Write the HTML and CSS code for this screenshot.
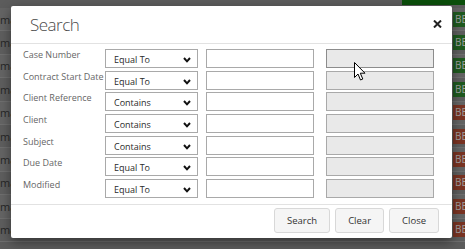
FILE: index.html
```html
<!DOCTYPE html>
<html lang="en">

<head>
    <meta charset="UTF-8">
    <meta name="viewport" content="width=device-width, initial-scale=1.0">
    <title>Cases - Search</title>
    <link rel="stylesheet" href="styles.css">
</head>

<body>
    <!-- page behind the dialog, dimmed -->
    <div class="page">
        <div class="toolbar"><span class="btn-new"></span></div>
        <div class="list">
            <div class="row"><span class="cell-name">ma</span><span class="badge ok">BEARBEITET</span></div>
            <div class="row"><span class="cell-name">ma</span><span class="badge ok">BEARBEITET</span></div>
            <div class="row"><span class="cell-name">ma</span><span class="badge ok">BEARBEITET</span></div>
            <div class="row"><span class="cell-name">ma</span><span class="badge ok">BEARBEITET</span></div>
            <div class="row"><span class="cell-name">ma</span><span class="badge late">BEARBEITET</span></div>
            <div class="row"><span class="cell-name">ma</span><span class="badge late">BEARBEITET</span></div>
            <div class="row"><span class="cell-name">ma</span><span class="badge late">BEARBEITET</span></div>
            <div class="row"><span class="cell-name">ma</span><span class="badge late">BEARBEITET</span></div>
            <div class="row"><span class="cell-name">ma</span><span class="badge late">BEARBEITET</span></div>
            <div class="row"><span class="cell-name">ma</span><span class="badge late">BEARBEITET</span></div>
        </div>
    </div>

    <div class="modal">
        <div class="modal-header">
            <h2>Search</h2>
            <button class="close" title="Close">
                <svg width="9" height="8" viewBox="0 0 9 8"><path d="M1 0.5 L8 7.5 M8 0.5 L1 7.5" stroke="#222" stroke-width="2" fill="none"/></svg>
            </button>
        </div>

        <div class="modal-body">
            <div class="filter-row">
                <label>Case Number</label>
                <div class="select"><span>Equal To</span><svg width="8" height="6" viewBox="0 0 8 6"><polyline points="1,1 4,4.3 7,1" stroke="#111" stroke-width="2" fill="none"/></svg></div>
                <input class="value" type="text">
                <input class="value-to hover" type="text" disabled>
            </div>
            <div class="filter-row">
                <label>Contract Start Date</label>
                <div class="select"><span>Equal To</span><svg width="8" height="6" viewBox="0 0 8 6"><polyline points="1,1 4,4.3 7,1" stroke="#111" stroke-width="2" fill="none"/></svg></div>
                <input class="value" type="text">
                <input class="value-to" type="text" disabled>
            </div>
            <div class="filter-row">
                <label>Client Reference</label>
                <div class="select"><span>Contains</span><svg width="8" height="6" viewBox="0 0 8 6"><polyline points="1,1 4,4.3 7,1" stroke="#111" stroke-width="2" fill="none"/></svg></div>
                <input class="value" type="text">
                <input class="value-to" type="text" disabled>
            </div>
            <div class="filter-row">
                <label>Client</label>
                <div class="select"><span>Contains</span><svg width="8" height="6" viewBox="0 0 8 6"><polyline points="1,1 4,4.3 7,1" stroke="#111" stroke-width="2" fill="none"/></svg></div>
                <input class="value" type="text">
                <input class="value-to" type="text" disabled>
            </div>
            <div class="filter-row">
                <label>Subject</label>
                <div class="select"><span>Contains</span><svg width="8" height="6" viewBox="0 0 8 6"><polyline points="1,1 4,4.3 7,1" stroke="#111" stroke-width="2" fill="none"/></svg></div>
                <input class="value" type="text">
                <input class="value-to" type="text" disabled>
            </div>
            <div class="filter-row">
                <label>Due Date</label>
                <div class="select"><span>Equal To</span><svg width="8" height="6" viewBox="0 0 8 6"><polyline points="1,1 4,4.3 7,1" stroke="#111" stroke-width="2" fill="none"/></svg></div>
                <input class="value" type="text">
                <input class="value-to" type="text" disabled>
            </div>
            <div class="filter-row">
                <label>Modified</label>
                <div class="select"><span>Equal To</span><svg width="8" height="6" viewBox="0 0 8 6"><polyline points="1,1 4,4.3 7,1" stroke="#111" stroke-width="2" fill="none"/></svg></div>
                <input class="value" type="text">
                <input class="value-to" type="text" disabled>
            </div>
        </div>

        <div class="modal-footer">
            <button class="btn">Search</button>
            <button class="btn">Clear</button>
            <button class="btn">Close</button>
        </div>
    </div>

    <!-- mouse pointer -->
    <svg class="cursor" width="12" height="19" viewBox="0 0 12 19">
        <path d="M0.5 0.5 L0.5 15.5 L4 12 L6.5 18 L8.8 17 L6.3 11.2 L11 11.2 Z" fill="#fff" stroke="#000" stroke-width="1"/>
    </svg>
</body>
</html>
```

FILE: styles.css
```css
body {
    font-family: 'Open Sans', 'Noto Sans', sans-serif;
    background-color: #5c5c5c;
    margin: 0;
    padding: 0;
    width: 465px;
    height: 249px;
    overflow: hidden;
    position: relative;
}

/* dimmed page behind */
.page {
    width: 465px;
}

.toolbar {
    height: 8px;
    display: flex;
    justify-content: flex-end;
}

.btn-new {
    width: 63px;
    height: 5px;
    background-color: #0b4f0b;
}

.row {
    height: 23.4px;
    display: grid;
    grid-template-columns: 453px 1fr;
    align-items: center;
    border-bottom: 1px solid #6f6f6f;
    box-sizing: border-box;
    background-color: #5e5e5e;
    overflow: hidden;
}

.row:nth-child(odd) {
    background-color: #646464;
}

.cell-name {
    white-space: nowrap;
    font-size: 11px;
    color: #262626;
}

.badge {
    height: 15px;
    line-height: 15px;
    font-size: 10px;
    color: #a0a0a0;
    padding-left: 2px;
    white-space: nowrap;
    overflow: hidden;
}

.badge.ok {
    background-color: #1f5a1f;
}

.badge.late {
    background-color: #7a3423;
}

/* dialog */
.modal {
    position: absolute;
    left: 11px;
    top: 6px;
    width: 441px;
    height: 232px;
    background-color: #fff;
    border-radius: 2px;
    box-shadow: 0 4px 12px rgba(0, 0, 0, 0.45);
    display: flex;
    flex-direction: column;
}

.modal-header {
    height: 37px;
    display: flex;
    align-items: center;
    justify-content: space-between;
    padding: 0 10px 0 19px;
    border-bottom: 1px solid #e2e2e2;
}

.modal-header h2 {
    margin: 0;
    font-size: 17px;
    letter-spacing: -0.5px;
    font-weight: 300;
    color: #4a4a4a;
}

.close {
    border: none;
    background: none;
    padding: 0;
    display: flex;
    margin-top: -1px;
}

.modal-body {
    padding: 5px 0 6px 12px;
    display: flex;
    flex-direction: column;
    gap: 2.67px;
    border-bottom: 1px solid #e2e2e2;
}

.filter-row {
    display: flex;
    height: 19px;
}

.filter-row label {
    width: 82px;
    font-size: 9px;
    line-height: 11px;
    color: #666;
    white-space: nowrap;
}

.select {
    width: 93px;
    height: 19px;
    box-sizing: border-box;
    border: 1px solid #a9a9a9;
    display: flex;
    align-items: center;
    justify-content: space-between;
    padding: 0 6px 0 8px;
    font-size: 9px;
    line-height: 17px;
    color: #2a2a2a;
}

.select span {
    margin-top: 2px;
}

.select svg {
    margin-top: 3px;
}

.value,
.value-to {
    width: 108px;
    height: 19px;
    box-sizing: border-box;
    border: 1px solid #a9a9a9;
    border-radius: 0;
    padding: 0;
    margin: 0;
    background-color: #fff;
}

.value {
    margin-left: 8px;
}

.value-to {
    margin-left: 12px;
    background-color: #e9e9e9;
}

.value-to.hover {
    border-color: #8c8c8c;
}

.modal-footer {
    flex: 1;
    display: flex;
    justify-content: flex-end;
    align-items: flex-start;
    gap: 5px;
    padding: 3px 13px 0 0;
}

.btn {
    height: 25px;
    padding: 0 12px;
    font-family: 'Open Sans', 'Noto Sans', sans-serif;
    font-size: 9.5px;
    color: #333;
    background-color: #f5f5f5;
    border: 1px solid #d8d8d8;
    border-radius: 3px;
}

.cursor {
    position: absolute;
    left: 354px;
    top: 62px;
}
```
